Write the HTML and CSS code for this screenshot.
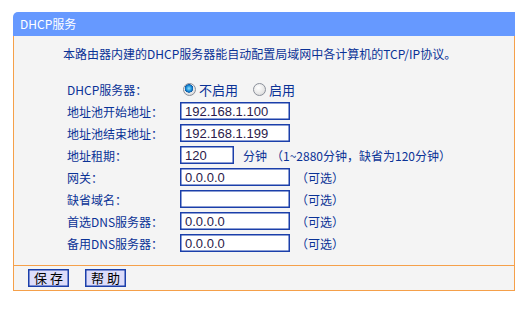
FILE: index.html
```html
<!DOCTYPE html>
<html lang="zh-CN">
<head>
<meta charset="utf-8">
<title>DHCP服务</title>
<link rel="stylesheet" href="styles.css">
</head>
<body>
<div class="panel">
  <div class="panel-head">DHCP服务</div>
  <div class="panel-body">
    <p class="intro">本路由器内建的DHCP服务器能自动配置局域网中各计算机的TCP/IP协议。</p>
    <div class="form">
      <div class="label">DHCP服务器：</div>
      <div class="ctrl">
        <label class="radio"><input type="radio" name="dhcp" checked><span>不启用</span></label>
        <label class="radio"><input type="radio" name="dhcp"><span>启用</span></label>
      </div>
      <div class="label">地址池开始地址：</div>
      <div class="ctrl"><input class="field" type="text" value="192.168.1.100"></div>
      <div class="label">地址池结束地址：</div>
      <div class="ctrl"><input class="field" type="text" value="192.168.1.199"></div>
      <div class="label">地址租期：</div>
      <div class="ctrl"><input class="field short" type="text" value="120"><span class="unit">分钟</span><span class="hint">（1~2880分钟，缺省为120分钟）</span></div>
      <div class="label">网关：</div>
      <div class="ctrl"><input class="field" type="text" value="0.0.0.0"><span class="opt">（可选）</span></div>
      <div class="label">缺省域名：</div>
      <div class="ctrl"><input class="field" type="text" value=""><span class="opt">（可选）</span></div>
      <div class="label">首选DNS服务器：</div>
      <div class="ctrl"><input class="field" type="text" value="0.0.0.0"><span class="opt">（可选）</span></div>
      <div class="label">备用DNS服务器：</div>
      <div class="ctrl"><input class="field" type="text" value="0.0.0.0"><span class="opt">（可选）</span></div>
    </div>
  </div>
  <div class="panel-foot">
    <button class="btn" type="button">保 存</button>
    <button class="btn" type="button">帮 助</button>
  </div>
</div>
</body>
</html>
```

FILE: styles.css
```css
html, body {
  margin: 0;
  padding: 0;
  background: #ffffff;
}

body {
  font-family: "Noto Sans CJK SC", "Liberation Sans", sans-serif;
  font-size: 12px;
  color: #0a3296;
}

.panel {
  width: 502px;
  margin: 12px 0 0 13px;
}

.panel-head {
  height: 24px;
  line-height: 24px;
  background: #6699ff;
  color: #ffffff;
  padding-left: 7px;
  border-top-left-radius: 5px;
}

.panel-body {
  background: #f4f4f4;
  border-left: 1px solid #f5a04a;
  border-right: 1px solid #f5a04a;
  padding: 8px 0 11px 49px;
}

.intro {
  margin: 0 0 14px 0;
  line-height: 20px;
  color: #0a3296;
}

.form {
  display: grid;
  grid-template-columns: 113px 1fr;
  grid-auto-rows: 22px;
  padding-left: 4px;
}

.label {
  display: flex;
  align-items: center;
}

.ctrl {
  display: flex;
  align-items: center;
}

.field {
  box-sizing: border-box;
  width: 110px;
  height: 18px;
  margin: 0;
  padding: 0 4px;
  border: 1px solid #1b3faa;
  box-shadow: inset 0 0 0 0.5px #1b3faa;
  background: #ffffff;
  font-family: "Liberation Sans", Arial, sans-serif;
  font-size: 13px;
  color: #2a1a4a;
  outline: none;
}

.field.short {
  width: 54px;
}

.unit {
  margin-left: 9px;
}

.hint {
  margin-left: 4px;
}

.opt {
  margin-left: 6px;
}

.radio {
  display: flex;
  align-items: center;
  margin-right: 12px;
  font-size: 13px;
}

.radio input {
  appearance: none;
  -webkit-appearance: none;
  box-sizing: border-box;
  width: 13px;
  height: 13px;
  margin: 0 3px 0 3px;
  border: 1px solid #8a8f9a;
  border-radius: 50%;
  background: radial-gradient(circle at 40% 35%, #ffffff 0%, #e6e6e6 60%, #cfcfcf 100%);
}

.radio input:checked {
  background:
    radial-gradient(circle at 45% 40%, #8fe0ff 0%, #1d8fd8 30%, #0b5aa8 45%, transparent 50%),
    radial-gradient(circle at 40% 35%, #ffffff 0%, #e6e6e6 60%, #cfcfcf 100%);
}

.panel-foot {
  display: flex;
  gap: 16px;
  background: #f4f4f4;
  border: 1px solid #f5a04a;
  padding: 3px 0 3px 14px;
}

.btn {
  box-sizing: border-box;
  width: 41px;
  height: 18px;
  margin: 0;
  padding: 0;
  border: 1px solid #1b3faa;
  box-shadow: inset 0 0 0 0.5px #1b3faa;
  background: #dcdcfa;
  color: #000000;
  font-family: "Noto Sans CJK SC", sans-serif;
  font-size: 13px;
  line-height: 16px;
}
```
